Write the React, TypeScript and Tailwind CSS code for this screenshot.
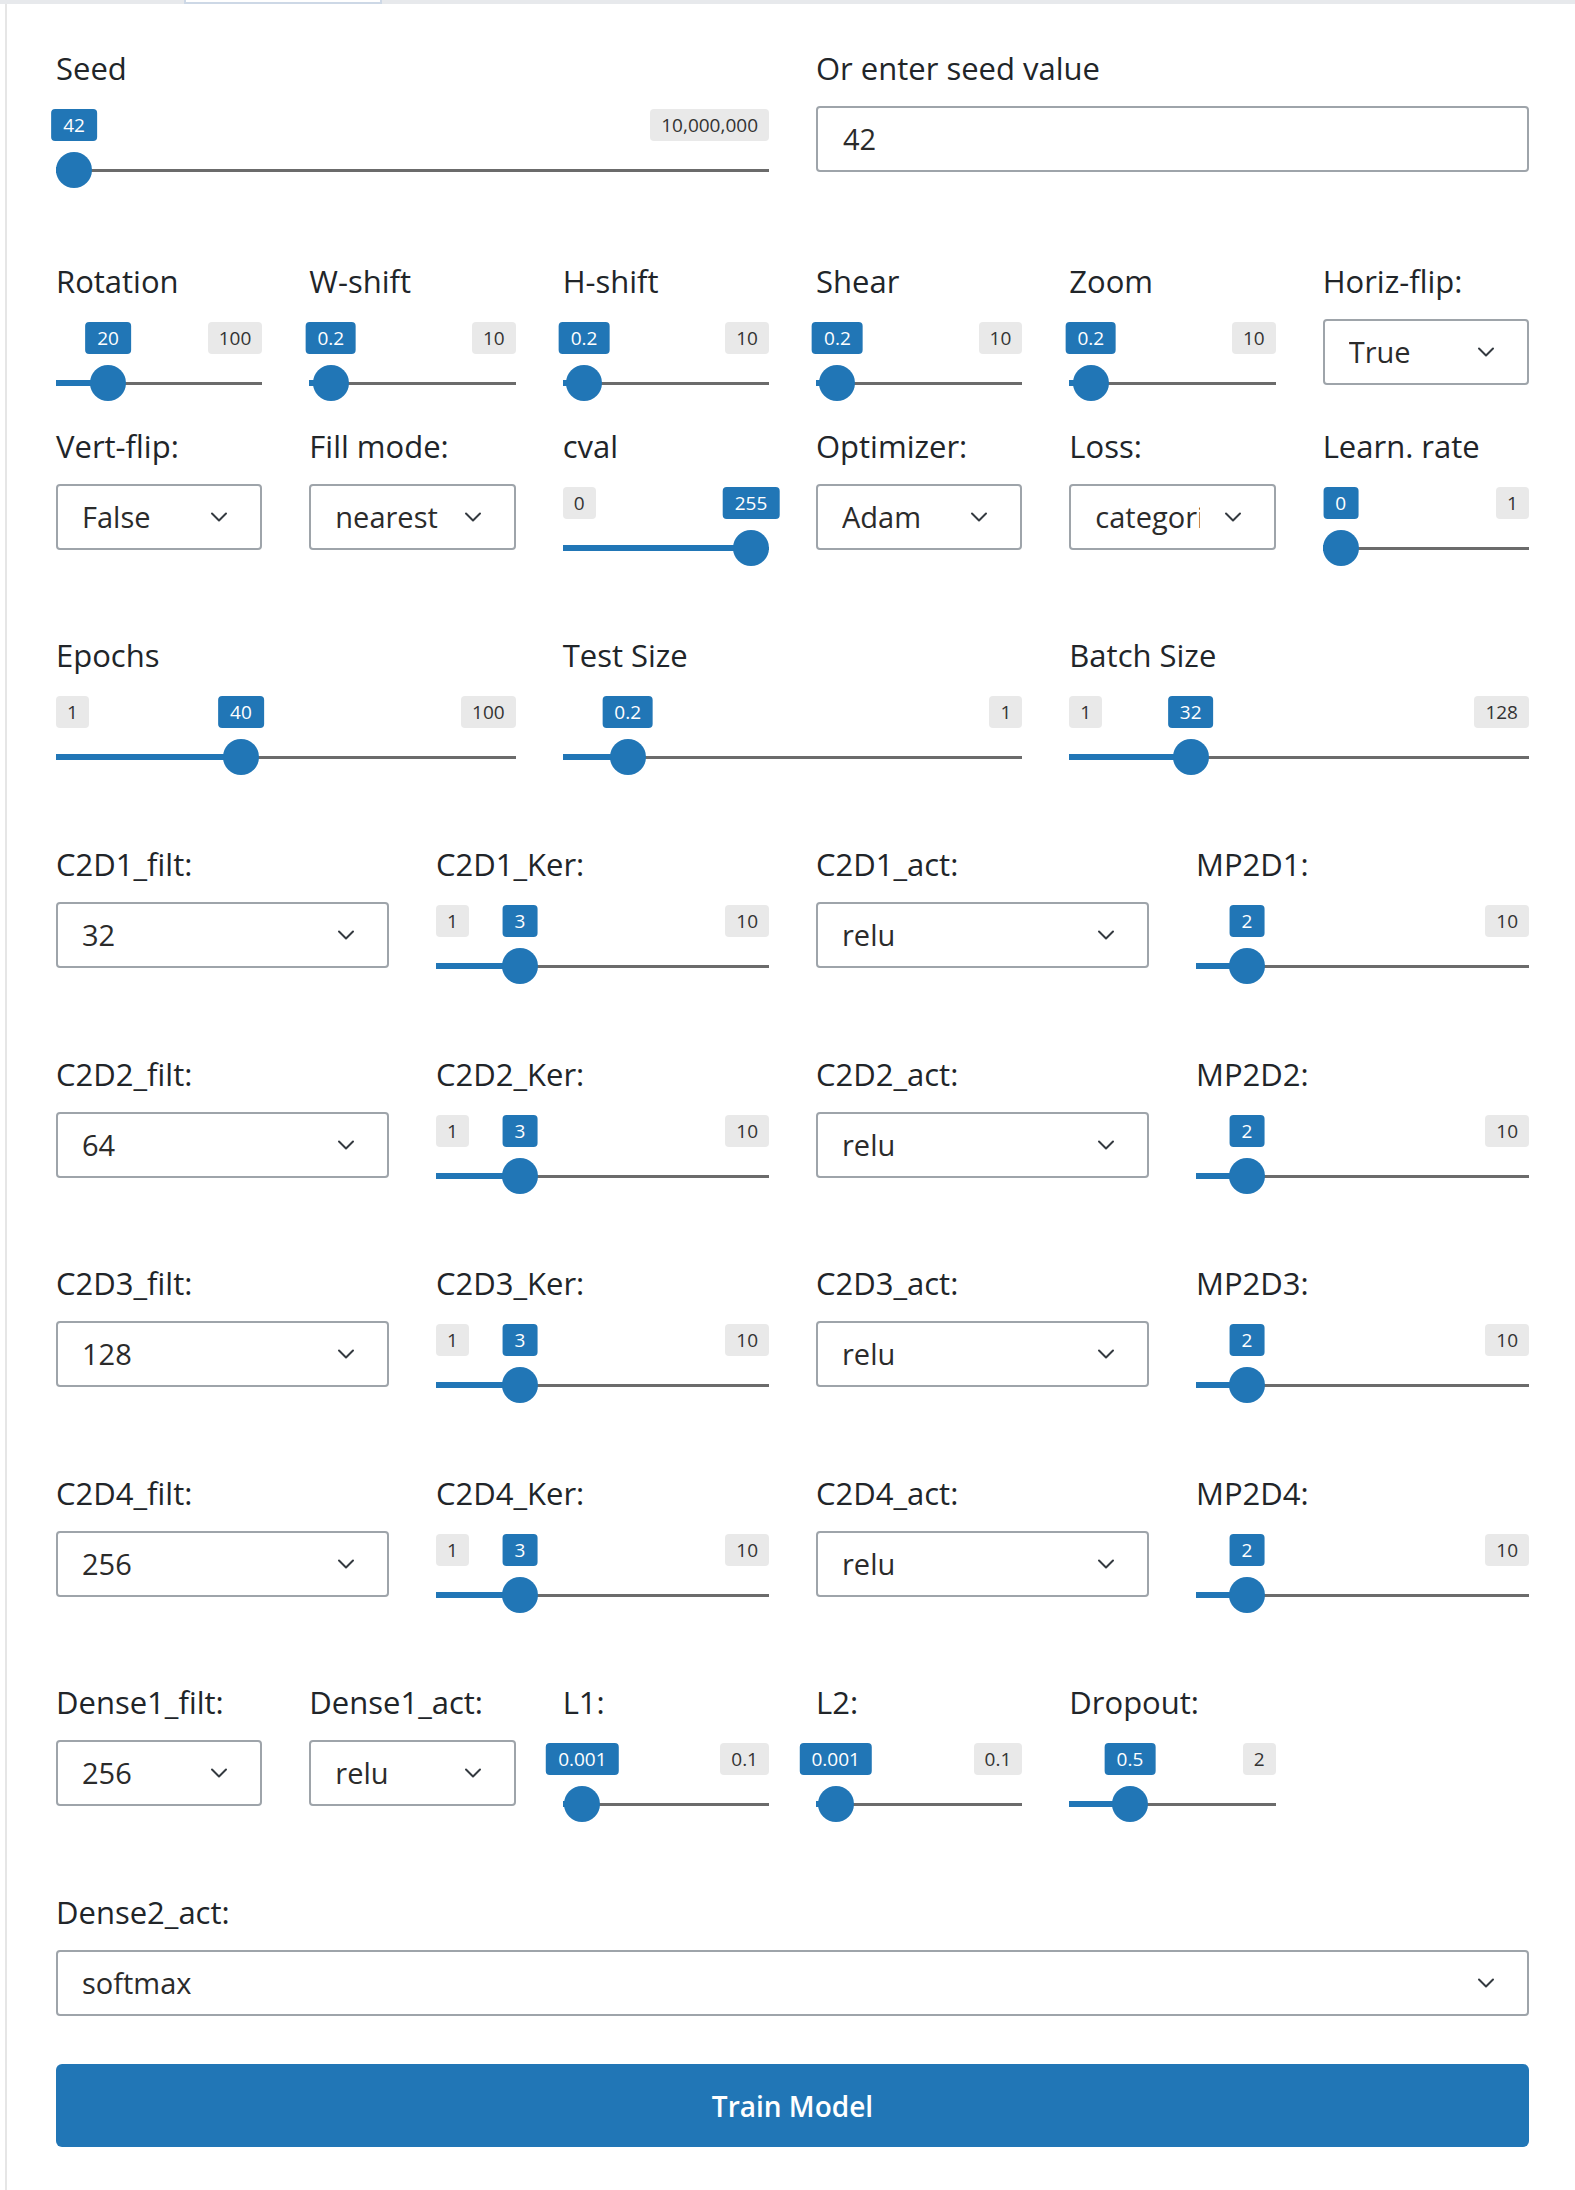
import React from 'react';

const BLUE = 'bg-[#2176b6]';

type SliderProps = {
  pct: number;
  val: string;
  min?: string;
  max?: string;
};

const Slider: React.FC<SliderProps> = ({ pct, val, min, max }) => {
  const center = `calc(18px + ${pct} * (100% - 36px))`;
  return (
    <div className="relative h-[66px]">
      {min && (
        <span className="absolute left-0 top-[3px] h-8 px-[11px] rounded-[4px] bg-[#e9e9e9] text-[19px] leading-8 text-[#333]">
          {min}
        </span>
      )}
      {max && (
        <span className="absolute right-0 top-[3px] h-8 px-[11px] rounded-[4px] bg-[#e9e9e9] text-[19px] leading-8 text-[#333]">
          {max}
        </span>
      )}
      <span
        className={`absolute top-[3px] h-8 px-3 rounded-[4px] ${BLUE} text-[19px] leading-8 text-white -translate-x-1/2 whitespace-nowrap`}
        style={{ left: center }}
      >
        {val}
      </span>
      <div className="absolute left-0 right-0 top-[63px] h-[3px] bg-[#6b6b6b]" />
      <div className={`absolute left-0 top-[61px] h-[6px] ${BLUE}`} style={{ width: center }} />
      <div
        className={`absolute top-[46px] w-9 h-9 rounded-full ${BLUE}`}
        style={{ left: `calc(${pct} * (100% - 36px))` }}
      />
    </div>
  );
};

const Chevron = () => (
  <svg width="18" height="12" viewBox="0 0 18 12" className="shrink-0">
    <path d="M2 2.5 L9 9.5 L16 2.5" fill="none" stroke="#343a40" strokeWidth="2" strokeLinecap="round" strokeLinejoin="round" />
  </svg>
);

const Select: React.FC<{ value: string }> = ({ value }) => (
  <div className="relative h-[66px] rounded-[4px] border-2 border-[#9ea4aa] bg-white flex items-center pl-[24px] pr-[74px]">
    <div className="min-w-0 flex-1 overflow-hidden whitespace-nowrap text-[29px] text-[#2b2b2b]">{value}</div>
    <div className="absolute right-[32px] top-1/2 -translate-y-1/2 flex">
      <Chevron />
    </div>
  </div>
);

const Field: React.FC<{ label: string; children: React.ReactNode }> = ({ label, children }) => (
  <div className="min-w-0">
    <div className="h-10 text-[31px] leading-[40px] text-[#212529] whitespace-nowrap">{label}</div>
    <div className="mt-[18px]">{children}</div>
  </div>
);

const convRows = [
  { n: 1, filt: '32', gap: 'mt-[85px]' },
  { n: 2, filt: '64', gap: 'mt-[86px]' },
  { n: 3, filt: '128', gap: 'mt-[85px]' },
  { n: 4, filt: '256', gap: 'mt-[86px]' },
];

export default function App() {
  return (
    <div className="w-[1575px] h-[2190px] bg-white font-['Open_Sans',sans-serif] overflow-hidden">
      <div className="relative h-[4px] bg-[#e7e9ec]">
        <div className="absolute left-[184px] top-0 w-[198px] h-[4px] bg-white border-x-2 border-b-2 border-[#cdd8e6]" />
      </div>
      <div className="ml-[5px] border-l-2 border-[#e6e6e6] pl-[49px] pt-[44px] pb-[44px]">
        <div className="w-[1473px] flex flex-col">
          <div className="grid grid-cols-2 gap-x-[47px]">
            <Field label="Seed">
              <Slider pct={0.0000042} val="42" max="10,000,000" />
            </Field>
            <Field label="Or enter seed value">
              <div className="h-[66px] rounded-[4px] border-2 border-[#9ea4aa] flex items-center pl-[25px] text-[29px] text-[#2b2b2b]">
                42
              </div>
            </Field>
          </div>

          <div className="grid grid-cols-6 gap-x-[47px] mt-[89px]">
            <Field label="Rotation">
              <Slider pct={0.2} val="20" max="100" />
            </Field>
            <Field label="W-shift">
              <Slider pct={0.02} val="0.2" max="10" />
            </Field>
            <Field label="H-shift">
              <Slider pct={0.02} val="0.2" max="10" />
            </Field>
            <Field label="Shear">
              <Slider pct={0.02} val="0.2" max="10" />
            </Field>
            <Field label="Zoom">
              <Slider pct={0.02} val="0.2" max="10" />
            </Field>
            <Field label="Horiz-flip:">
              <Select value="True" />
            </Field>
          </div>

          <div className="grid grid-cols-6 gap-x-[47px] mt-[41px]">
            <Field label="Vert-flip:">
              <Select value="False" />
            </Field>
            <Field label="Fill mode:">
              <Select value="nearest" />
            </Field>
            <Field label="cval">
              <Slider pct={1} val="255" min="0" />
            </Field>
            <Field label="Optimizer:">
              <Select value="Adam" />
            </Field>
            <Field label="Loss:">
              <Select value="categorical_crossentropy" />
            </Field>
            <Field label="Learn. rate">
              <Slider pct={0} val="0" max="1" />
            </Field>
          </div>

          <div className="grid grid-cols-3 gap-x-[47px] mt-[85px]">
            <Field label="Epochs">
              <Slider pct={39 / 99} val="40" min="1" max="100" />
            </Field>
            <Field label="Test Size">
              <Slider pct={1 / 9} val="0.2" max="1" />
            </Field>
            <Field label="Batch Size">
              <Slider pct={31 / 127} val="32" min="1" max="128" />
            </Field>
          </div>

          {convRows.map((r) => (
            <div key={r.n} className={`grid grid-cols-4 gap-x-[47px] ${r.gap}`}>
              <Field label={`C2D${r.n}_filt:`}>
                <Select value={r.filt} />
              </Field>
              <Field label={`C2D${r.n}_Ker:`}>
                <Slider pct={2 / 9} val="3" min="1" max="10" />
              </Field>
              <Field label={`C2D${r.n}_act:`}>
                <Select value="relu" />
              </Field>
              <Field label={`MP2D${r.n}:`}>
                <Slider pct={1 / 9} val="2" max="10" />
              </Field>
            </div>
          ))}

          <div className="grid grid-cols-6 gap-x-[47px] mt-[85px]">
            <Field label="Dense1_filt:">
              <Select value="256" />
            </Field>
            <Field label="Dense1_act:">
              <Select value="relu" />
            </Field>
            <Field label="L1:">
              <Slider pct={0.01} val="0.001" max="0.1" />
            </Field>
            <Field label="L2:">
              <Slider pct={0.01} val="0.001" max="0.1" />
            </Field>
            <Field label="Dropout:">
              <Slider pct={0.25} val="0.5" max="2" />
            </Field>
          </div>

          <div className="mt-[86px]">
            <Field label="Dense2_act:">
              <Select value="softmax" />
            </Field>
          </div>

          <button className={`mt-[48px] h-[83px] w-full rounded-[6px] ${BLUE} text-white text-[28px] font-semibold`}>
            Train Model
          </button>
        </div>
      </div>
    </div>
  );
}
